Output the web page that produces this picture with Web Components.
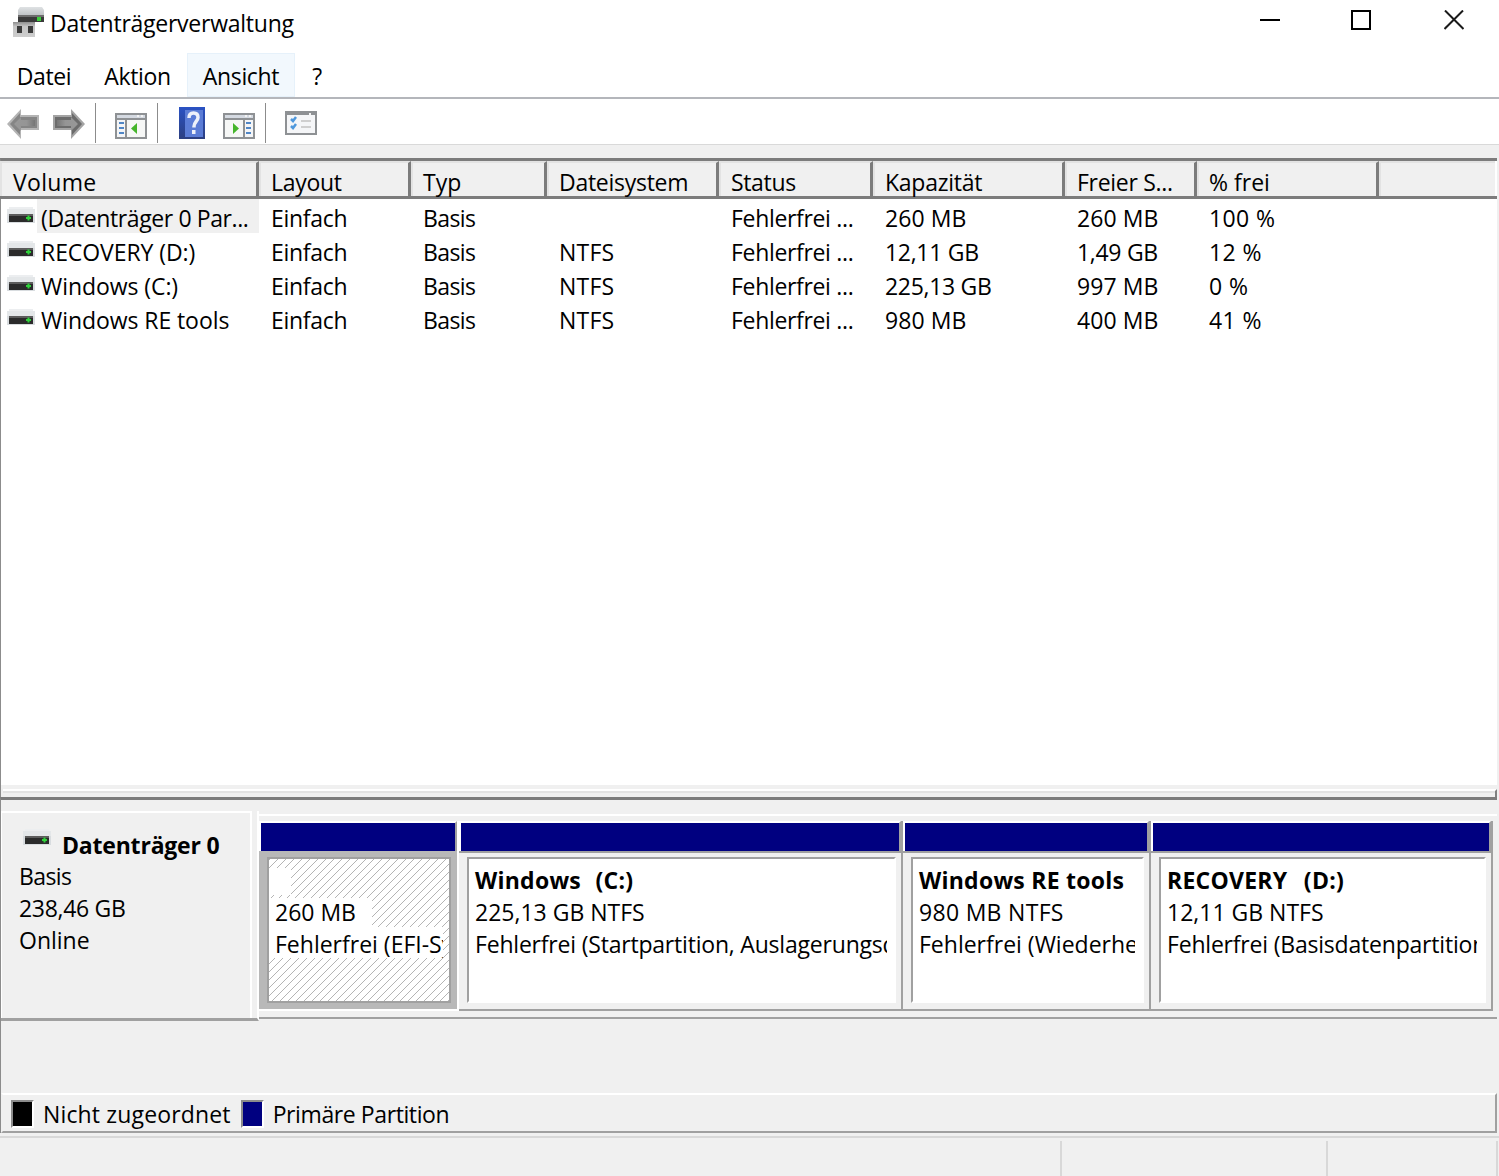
<!DOCTYPE html>
<html lang="de">
<head>
<meta charset="utf-8">
<title>Datenträgerverwaltung</title>
<style>
    html, body {
        margin: 0;
        height: 100%;
        background: #f0f0f0;
    }

    body {
        font-family: "Open Sans", "Noto Sans", sans-serif;
        font-size: 23px;
        color: #000;
        overflow: hidden;
    }
</style>
</head>
<body>
<app-window>
    <title-bar>Datenträgerverwaltung</title-bar>
    <menu-bar></menu-bar>
    <tool-bar></tool-bar>
    <volume-list></volume-list>
    <disk-view></disk-view>
    <legend-bar></legend-bar>
    <status-bar></status-bar>
</app-window>

<script>
// small drive glyph used in the list and in the disk panel
class DriveIcon extends HTMLElement {
    constructor(){
        super();
        this.attachShadow({mode: 'open'});
        this.shadowRoot.innerHTML = `
<style>
    :host { display: block; width: 28px; height: 16px; }
    svg { display: block; }
</style>
<svg width="28" height="16" viewBox="0 0 28 16">
    <rect x="2" y="0" width="24" height="2" fill="#eceef0"/>
    <rect x="0" y="2" width="28" height="14" fill="#d8dcdf"/>
    <rect x="0" y="2" width="28" height="5" fill="#e4e7e9"/>
    <rect x="2" y="7" width="24" height="8" fill="#2b2b2b"/>
    <rect x="2" y="7" width="24" height="2" fill="#5c5c5c"/>
    <rect x="19" y="10" width="5" height="2" fill="#2fd23a"/>
    <rect x="20.500" y="8.500" width="2" height="5" fill="#2fd23a"/>
</svg>`;
    }
}
customElements.define('drive-icon', DriveIcon);

class AppWindow extends HTMLElement {
    constructor(){
        super();
        this.attachShadow({mode: 'open'});
        this.shadowRoot.innerHTML = `
<style>
    :host {
        display: flex;
        flex-direction: column;
        width: 1499px;
        height: 1176px;
        background: #f0f0f0;
    }
</style>
<slot></slot>`;
    }
}
customElements.define('app-window', AppWindow);

class TitleBar extends HTMLElement {
    constructor(){
        super();
        this.attachShadow({mode: 'open'});
        this.shadowRoot.innerHTML = `
<style>
    :host {
        display: flex;
        align-items: center;
        height: 45px;
        padding: 0 0 8px 13px;
        background: #fff;
    }
    .icon { margin-right: 5px; }
    .name { flex: 1; letter-spacing: -0.25px; }
    .btn {
        display: block;
        width: 20px;
        height: 20px;
        margin-top: -5px;
    }
    svg { display: block; }
</style>
<svg class="icon" width="32" height="32" viewBox="0 0 32 32">
    <defs>
        <linearGradient id="top" x1="0" y1="0" x2="0" y2="1">
            <stop offset="0" stop-color="#dfe2e4"/>
            <stop offset="1" stop-color="#a5a9ac"/>
        </linearGradient>
        <linearGradient id="base" x1="0" y1="0" x2="0" y2="1">
            <stop offset="0" stop-color="#8f8f8f"/>
            <stop offset="0.3" stop-color="#c4c4c4"/>
            <stop offset="1" stop-color="#cdcdcd"/>
        </linearGradient>
    </defs>
    <path d="M7 0h22l2 3v12H5V3z" fill="url(#top)"/>
    <rect x="5" y="8" width="26" height="7" fill="#3a3a3a"/>
    <rect x="5" y="8" width="26" height="2" fill="#6e6e6e"/>
    <rect x="24" y="10" width="4" height="4" fill="#3ccf3c"/>
    <rect x="0" y="15" width="22" height="15" fill="url(#base)"/>
    <rect x="4" y="19" width="5" height="7" fill="#3a3a3a"/>
    <rect x="15" y="19" width="5" height="7" fill="#3a3a3a"/>
</svg>
<span class="name"><slot></slot></span>
<svg class="btn" style="margin-right:71px" viewBox="0 0 20 20"><rect y="9" width="20" height="2" fill="#000"/></svg>
<svg class="btn" style="margin-right:73px" viewBox="0 0 20 20"><rect x="1" y="1" width="18" height="18" fill="none" stroke="#000" stroke-width="2"/></svg>
<svg class="btn" style="margin-right:35px" viewBox="0 0 20 20"><path d="M1 0.500L19.500 19M19 0.500L0.500 19" fill="none" stroke="#1a1a1a" stroke-width="2"/></svg>`;
    }
}
customElements.define('title-bar', TitleBar);

class MenuBar extends HTMLElement {
    constructor(){
        super();
        this.attachShadow({mode: 'open'});
        this.shadowRoot.innerHTML = `
<style>
    :host {
        display: flex;
        height: 44px;
        background: #fff;
        border-bottom: 2px solid #b4b6bb;
    }
    span {
        box-sizing: border-box;
        display: flex;
        align-items: center;
        justify-content: center;
        height: 44px;
        padding-top: 2px;
        letter-spacing: -0.35px;
    }
    .hot {
        background: #f2f8fd;
        border: 1px solid #e6f1fa;
    }
</style>
<span style="width:88px">Datei</span>
<span style="width:99px">Aktion</span>
<span style="width:108px" class="hot">Ansicht</span>
<span style="width:44px">?</span>`;
    }
}
customElements.define('menu-bar', MenuBar);

class ToolBar extends HTMLElement {
    constructor(){
        super();
        this.attachShadow({mode: 'open'});
        // split view icon, the tree pane is on the left or on the right
        const pane = (flip, top, left) => `
<svg width="32" height="26" viewBox="0 0 32 26" style="margin:${top}px 0 0 ${left}px">
    <rect width="32" height="26" fill="#8e9194"/>
    <rect x="2" y="2" width="28" height="3" fill="#d5dae2"/>
    <rect x="22" y="2" width="2" height="2" fill="#f4f4f4"/>
    <rect x="26" y="2" width="2" height="2" fill="#f4f4f4"/>
    <g ${flip ? 'transform="translate(32 0) scale(-1 1)"' : ''}>
        <rect x="2" y="7" width="8" height="17" fill="#f4f5f7"/>
        <rect x="4" y="9" width="5" height="2" fill="#4f86c6"/>
        <rect x="4" y="14" width="5" height="2" fill="#4f86c6"/>
        <rect x="4" y="19" width="5" height="2" fill="#4f86c6"/>
        <rect x="12" y="7" width="18" height="17" fill="#f6f7f6"/>
        <path d="M16 15.500l6-5.500v11z" fill="#45b52c"/>
    </g>
</svg>`;
        const arrow = (flip, left, rim, dark) => `
<svg width="32" height="30" viewBox="0 0 32 30" style="margin:10px 0 0 ${left}px;${flip ? 'transform:scaleX(-1)' : ''}">
    <path d="M14 0L0 15l14 15v-9h18V6H14z" fill="${rim}"/>
    <path d="M13 4L3 15l10 11v-7h17V8H13z" fill="${dark}"/>
    <path d="M14 8l-7 7 7 7v-5h14v-6H14z" fill="url(#arrow)"/>
</svg>`;
        this.shadowRoot.innerHTML = `
<style>
    :host {
        display: flex;
        align-items: flex-start;
        height: 45px;
        padding-left: 7px;
        background: #fff;
        border-bottom: 1px solid #d9d9d9;
    }
    svg { display: block; flex: none; }
    .sep {
        width: 1px;
        height: 40px;
        margin: 4px 0 0 10px;
        background: #8c8c8c;
        flex: none;
    }
</style>
<svg width="0" height="0" style="position:absolute">
    <defs>
        <linearGradient id="arrow" x1="0" y1="0" x2="1" y2="0">
            <stop offset="0" stop-color="#989898"/>
            <stop offset="0.6" stop-color="#959595"/>
            <stop offset="1" stop-color="#767676"/>
        </linearGradient>
    </defs>
</svg>
${arrow(false, 0, '#b4b4b4', '#858585')}
${arrow(true, 14, '#a4a4a4', '#6c6c6c')}
<div class="sep"></div>
${pane(false, 14, 19)}
<div class="sep"></div>
<svg width="26" height="32" viewBox="0 0 26 32" style="margin:8px 0 0 21px">
    <defs>
        <linearGradient id="help" x1="0" y1="0" x2="0" y2="1">
            <stop offset="0" stop-color="#2a52c4"/>
            <stop offset="1" stop-color="#2c3f80"/>
        </linearGradient>
    </defs>
    <rect width="26" height="32" fill="url(#help)"/>
    <rect x="6" y="3" width="18" height="27" fill="#5b7cd6"/>
    <path d="M10 11c0-3.500 2-5 4.500-5s4.500 1.500 4.500 4.500c0 3.500-4 4.500-4 9v1" fill="none" stroke="#eef1fa" stroke-width="3.500"/>
    <rect x="13" y="23" width="3.500" height="4" fill="#eef1fa"/>
</svg>
${pane(true, 14, 18)}
<div class="sep"></div>
<svg width="32" height="24" viewBox="0 0 32 24" style="margin:12px 0 0 19px">
    <rect width="32" height="24" fill="#8e9194"/>
    <rect x="2" y="4" width="28" height="18" fill="#f5f6f8"/>
    <rect x="24" y="2" width="2" height="2" fill="#f2f2f2"/>
    <path d="M6 8l2 2 3-4M6 15l2 2 3-4" fill="none" stroke="#4f98dc" stroke-width="2.500"/>
    <rect x="16" y="9" width="10" height="2" fill="#cfcfcf"/>
    <rect x="16" y="15" width="10" height="2" fill="#cfcfcf"/>
</svg>`;
    }
}
customElements.define('tool-bar', ToolBar);

const columns = [
    ['Volume', 259, 0.3],
    ['Layout', 152, -0.3],
    ['Typ', 136, 0],
    ['Dateisystem', 172, -0.27],
    ['Status', 154, -0.35],
    ['Kapazität', 192, -0.25],
    ['Freier S...', 132, -0.3],
    ['% frei', 182, 0],
    ['', 116, 0]
];

// letter spacing per column of the list
const spacing = [-0.07, -0.3, -0.6, 0.2, -0.33, -0.3, -0.3, 0.4];

const rows = [
    ['(Datenträger 0 Par...', 'Einfach', 'Basis', '', 'Fehlerfrei ...', '260 MB', '260 MB', '100 %'],
    ['RECOVERY (D:)', 'Einfach', 'Basis', 'NTFS', 'Fehlerfrei ...', '12,11 GB', '1,49 GB', '12 %'],
    ['Windows (C:)', 'Einfach', 'Basis', 'NTFS', 'Fehlerfrei ...', '225,13 GB', '997 MB', '0 %'],
    ['Windows RE tools', 'Einfach', 'Basis', 'NTFS', 'Fehlerfrei ...', '980 MB', '400 MB', '41 %']
];

class VolumeList extends HTMLElement {
    constructor(){
        super();
        this.attachShadow({mode: 'open'});
        const head = columns.map(c => `<div class="th" style="width:${c[1]}px;letter-spacing:${c[2]}px"><span>${c[0]}</span></div>`).join('');
        const body = rows.map((r, n) => `
<div class="tr">
    ${r.map((t, i) => i == 0
        ? `<div class="td first" style="width:${columns[0][1]}px"><drive-icon></drive-icon><span class="${n == 0 ? 'sel' : ''}">${t}</span></div>`
        : `<div class="td" style="width:${columns[i][1]}px;letter-spacing:${t.endsWith('MB') ? 0.1 : spacing[i]}px">${t}</div>`).join('')}
</div>`).join('');
        this.shadowRoot.innerHTML = `
<style>
    :host {
        display: flex;
        flex-direction: column;
        box-sizing: border-box;
        height: 639px;
        margin-top: 13px;
        margin-right: 2px;
        background: #fff;
        border-top: 3px solid #7c7c7c;
        border-left: 1px solid #8c8c8c;
    }
    .head {
        display: flex;
        box-sizing: border-box;
        height: 38px;
        margin-left: -1px;
        border-bottom: 3px solid #7c7c7c;
    }
    .th {
        box-sizing: border-box;
        flex: none;
        height: 35px;
        padding: 3px 0 0 10px;
        background: #f0f0f0;
        border: 2px solid #e3e3e3;
        border-bottom: 0;
        border-right: 3px solid #7c7c7c;
        line-height: 32px;
        white-space: nowrap;
    }
    .th:first-child { padding-left: 11px; }
    .th:last-child { border-right: 0; }
    .rows { flex: 1; }
    .tr { display: flex; height: 34px; margin-left: -1px; }
    .td {
        box-sizing: border-box;
        flex: none;
        padding-left: 12px;
        line-height: 38px;
        white-space: nowrap;
        overflow: hidden;
    }
    .first {
        display: flex;
        padding-left: 7px;
        letter-spacing: -0.07px;
    }
    .first drive-icon { margin: 8px 1px 0 0; flex: none; }
    .first span { flex: 1; padding-left: 5px; }
    .first .sel { background: #f0f0f0; letter-spacing: -0.4px; padding-left: 4px; margin-left: 1px; }
    .scroll {
        flex: none;
        box-sizing: border-box;
        height: 12px;
        padding-top: 4px;
        background: #f0f0f0;
    }
    .scroll div {
        box-sizing: border-box;
        height: 8px;
        margin-left: 2px;
        background: #f0f0f0;
        border-top: 2px solid #fff;
        border-right: 2px solid #808080;
        box-shadow: inset 0 2px 0 #e3e3e3;
    }
</style>
<div class="head">${head}</div>
<div class="rows">${body}</div>
<div class="scroll"><div></div></div>`;
    }
}
customElements.define('volume-list', VolumeList);

// one partition of a disk: navy header bar and a body with three text lines
class DiskPartition extends HTMLElement {
    constructor(){
        super();
        this.attachShadow({mode: 'open'});
        const cls = this.hasAttribute('selected') ? 'part sel' : 'part';
        const label = this.getAttribute('label') || '';
        this.shadowRoot.innerHTML = `
<style>
    :host {
        display: block;
        flex: none;
    }
    .part {
        box-sizing: border-box;
        height: 190px;
        border-right: 2px solid #a0a0a0;
        border-bottom: 2px solid #a0a0a0;
    }
    .bar {
        box-sizing: border-box;
        height: 30px;
        background: #000080;
        border-top: 2px solid #fff;
        border-left: 2px solid #fff;
        border-right: 2px solid #a0a0a0;
    }
    .rest {
        box-sizing: border-box;
        height: 158px;
        padding: 4px 5px 0 8px;
        background: #f0f0f0;
        border-top: 2px solid #a0a0a0;
    }
    .inner {
        box-sizing: border-box;
        height: 146px;
        padding: 5px 7px 0 6px;
        background: #fff;
        border-top: 2px solid #a0a0a0;
        border-left: 2px solid #a0a0a0;
        border-right: 2px solid #fff;
        border-bottom: 2px solid #fff;
        line-height: 32px;
        white-space: nowrap;
        overflow: hidden;
    }
    .inner b {
        display: block;
        height: 32px;
        font-weight: 700;
        letter-spacing: 0.25px;
        word-spacing: var(--label-gap, 0);
    }
    .inner span { display: block; height: 32px; overflow: hidden; }
    .inner span.size { letter-spacing: var(--size-gap, 0); }
    .inner span.state { letter-spacing: var(--state-gap, -0.2px); }

    .sel { border-right-color: #fff; border-bottom-color: #fff; }
    .sel .rest {
        padding: 6px 6px 0 8px;
        background: #b8b8b8;
        border-top: 0;
        height: 158px;
    }
    .sel .inner {
        padding: 0;
        border: 2px solid #a0a0a0;
        background: repeating-linear-gradient(-45deg, #b4b4b4 0 1px, #fff 1px 5.66px);
    }
    .sel .inner b { width: 22px; height: 27px; margin-top: 9px; margin-bottom: 3px; background: #fff; }
    .sel .inner span { box-sizing: border-box; padding-left: 6px; background: #fff; }
    .sel .inner span.size { width: 103px; height: 29px; line-height: 28px; }
    .sel .inner span.state { width: 174px; height: 31px; line-height: 35px; letter-spacing: 0; }
</style>
<div class="${cls}">
    <div class="bar"></div>
    <div class="rest">
        <div class="inner">
            <b>${label}</b>
            <span class="size"><slot name="size"></slot></span>
            <span class="state"><slot name="state"></slot></span>
        </div>
    </div>
</div>`;
    }
}
customElements.define('disk-partition', DiskPartition);

class DiskView extends HTMLElement {
    constructor(){
        super();
        this.attachShadow({mode: 'open'});
        this.shadowRoot.innerHTML = `
<style>
    :host {
        display: block;
        box-sizing: border-box;
        height: 296px;
        margin-right: 2px;
        padding-top: 11px;
        border-top: 3px solid #7c7c7c;
        border-left: 1px solid #8c8c8c;
    }
    .row { display: flex; align-items: flex-start; }
    .wrap {
        box-sizing: border-box;
        flex: none;
        width: 258px;
        height: 210px;
        border-right: 2px solid #fff;
        border-bottom: 3px solid #a0a0a0;
    }
    .info {
        box-sizing: border-box;
        width: 251px;
        height: 207px;
        padding: 16px 0 0 17px;
        border-top: 2px solid #fff;
        border-left: 1px solid #fff;
        border-right: 2px solid #fff;
        line-height: 32px;
    }
    .name {
        display: flex;
        align-items: flex-start;
        height: 31px;
        font-weight: 700;
        letter-spacing: -0.2px;
    }
    .name drive-icon { margin: 0 11px 0 4px; }
    .basis { letter-spacing: -0.6px; }
    .size { letter-spacing: -0.3px; }
    .parts {
        box-sizing: border-box;
        display: flex;
        flex: 1;
        height: 205px;
        margin-top: 3px;
        padding-top: 5px;
        border-top: 2px solid #fff;
        border-bottom: 2px solid #a0a0a0;
    }
</style>
<div class="row">
    <div class="wrap">
        <div class="info">
            <div class="name"><drive-icon></drive-icon>Datenträger 0</div>
            <div class="basis">Basis</div>
            <div class="size">238,46 GB</div>
            <div>Online</div>
        </div>
    </div>
    <div class="parts">
        <disk-partition selected style="width:200px">
            <span slot="size">260 MB</span><span slot="state">Fehlerfrei (EFI-Sy</span>
        </disk-partition>
        <disk-partition label="Windows&nbsp; (C:)" style="width:444px;--label-gap:1px">
            <span slot="size">225,13 GB NTFS</span><span slot="state">Fehlerfrei (Startpartition, Auslagerungsd</span>
        </disk-partition>
        <disk-partition label="Windows RE tools" style="width:248px;--size-gap:0.3px;--state-gap:0px">
            <span slot="size">980 MB NTFS</span><span slot="state">Fehlerfrei (Wiederher</span>
        </disk-partition>
        <disk-partition label="RECOVERY&nbsp; (D:)" style="width:342px;--label-gap:2px">
            <span slot="size">12,11 GB NTFS</span><span slot="state">Fehlerfrei (Basisdatenpartition</span>
        </disk-partition>
    </div>
</div>`;
    }
}
customElements.define('disk-view', DiskView);

class LegendBar extends HTMLElement {
    constructor(){
        super();
        this.attachShadow({mode: 'open'});
        this.shadowRoot.innerHTML = `
<style>
    :host {
        display: flex;
        align-items: center;
        box-sizing: border-box;
        height: 40px;
        margin: 0 2px 0 1px;
        padding-left: 8px;
        border-left: 2px solid #f0f0f0;
        border-top: 2px solid #fff;
        border-bottom: 2px solid #a0a0a0;
        border-right: 2px solid #a0a0a0;
        box-shadow: -1px 0 0 #8c8c8c;
    }
    .swatch {
        box-sizing: border-box;
        flex: none;
        width: 23px;
        height: 28px;
        margin-top: 1px;
        border-top: 2px solid #8c8c8c;
        border-left: 2px solid #8c8c8c;
        border-right: 2px solid #fff;
        border-bottom: 2px solid #fff;
    }
    span { padding-top: 1px; }
</style>
<div class="swatch" style="background:#000"></div>
<span style="margin:0 10px 0 9px;letter-spacing:0.15px">Nicht zugeordnet</span>
<div class="swatch" style="background:#000080"></div>
<span style="margin-left:9px;letter-spacing:-0.4px">Primäre Partition</span>`;
    }
}
customElements.define('legend-bar', LegendBar);

class StatusBar extends HTMLElement {
    constructor(){
        super();
        this.attachShadow({mode: 'open'});
        this.shadowRoot.innerHTML = `
<style>
    :host {
        display: flex;
        flex: 1;
        margin-top: 3px;
        padding-top: 3px;
        border-top: 2px solid #d8d8d8;
    }
    div { flex: none; border-right: 2px solid #d8d8d8; box-sizing: border-box; }
</style>
<div style="width:1062px"></div>
<div style="width:266px"></div>
<div style="width:170px"></div>`;
    }
}
customElements.define('status-bar', StatusBar);
</script>
</body>
</html>
